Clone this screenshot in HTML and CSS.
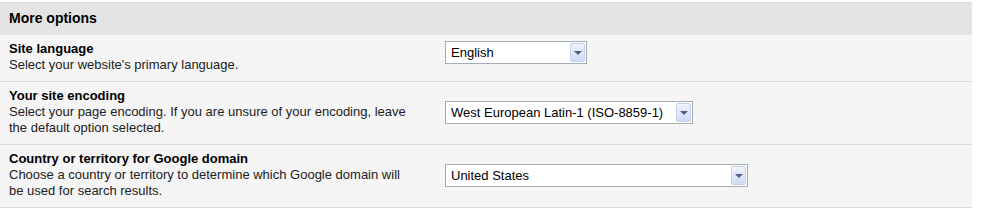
FILE: index.html
```html
<!DOCTYPE html>
<html lang="en">
<head>
    <meta charset="UTF-8">
    <meta name="viewport" content="width=device-width, initial-scale=1.0">
    <title>More options</title>
    <link rel="stylesheet" href="styles.css">
</head>
<body>
    <div class="panel">
        <div class="panel-header">More options</div>

        <div class="option-row first">
            <div class="option-text">
                <div class="option-title">Site language</div>
                <div class="option-desc">Select your website's primary language.</div>
            </div>
            <div class="dropdown" style="width: 142px;">
                <span class="dropdown-value">English</span>
                <span class="dropdown-btn"></span>
            </div>
        </div>

        <div class="option-row">
            <div class="option-text">
                <div class="option-title">Your site encoding</div>
                <div class="option-desc">Select your page encoding. If you are unsure of your encoding, leave the default option selected.</div>
            </div>
            <div class="dropdown" style="width: 248px;">
                <span class="dropdown-value">West European Latin-1 (ISO-8859-1)</span>
                <span class="dropdown-btn"></span>
            </div>
        </div>

        <div class="option-row">
            <div class="option-text">
                <div class="option-title">Country or territory for Google domain</div>
                <div class="option-desc">Choose a country or territory to determine which Google domain will be used for search results.</div>
            </div>
            <div class="dropdown" style="width: 303px;">
                <span class="dropdown-value">United States</span>
                <span class="dropdown-btn"></span>
            </div>
        </div>
    </div>
</body>
</html>
```

FILE: styles.css
```css
:root {
    --header-bg: #e4e4e4;
    --row-bg: #f5f5f5;
    --line: #dcdcdc;
    --text: #000000;
    --desc: #222222;
}

body {
    font-family: "Liberation Sans", Arial, sans-serif;
    margin: 0;
    padding: 0;
    background-color: #ffffff;
    color: var(--text);
}

.panel {
    width: 972px;
    margin-top: 2px;
    border-top: 1px solid #dadada;
}

.panel-header {
    background-color: var(--header-bg);
    height: 32px;
    line-height: 31px;
    padding-left: 9px;
    font-size: 14px;
    font-weight: bold;
}

.option-row {
    display: flex;
    align-items: center;
    background-color: var(--row-bg);
    border-bottom: 1px solid var(--line);
    padding: 6px 0 8px 9px;
}

.option-row.first {
    align-items: flex-start;
}

.option-text {
    width: 400px;
    margin-right: 36px;
    font-size: 13px;
    line-height: 16px;
}

.option-title {
    font-weight: bold;
}

.option-desc {
    color: var(--desc);
}

.dropdown {
    display: flex;
    align-items: center;
    justify-content: space-between;
    box-sizing: border-box;
    height: 23px;
    background-color: #ffffff;
    border: 1px solid #a5acb2;
    padding: 0 1px 0 5px;
    font-size: 13px;
}

.dropdown-btn {
    position: relative;
    width: 15px;
    height: 19px;
    box-sizing: border-box;
    border: 1px solid #c3d0ee;
    border-radius: 2px;
    background: linear-gradient(to bottom, #f0f4fd, #d0dbf5);
}

.dropdown-btn::after {
    content: "";
    position: absolute;
    left: 3px;
    top: 7px;
    border-left: 4px solid transparent;
    border-right: 4px solid transparent;
    border-top: 4px solid #4d6185;
}
```
